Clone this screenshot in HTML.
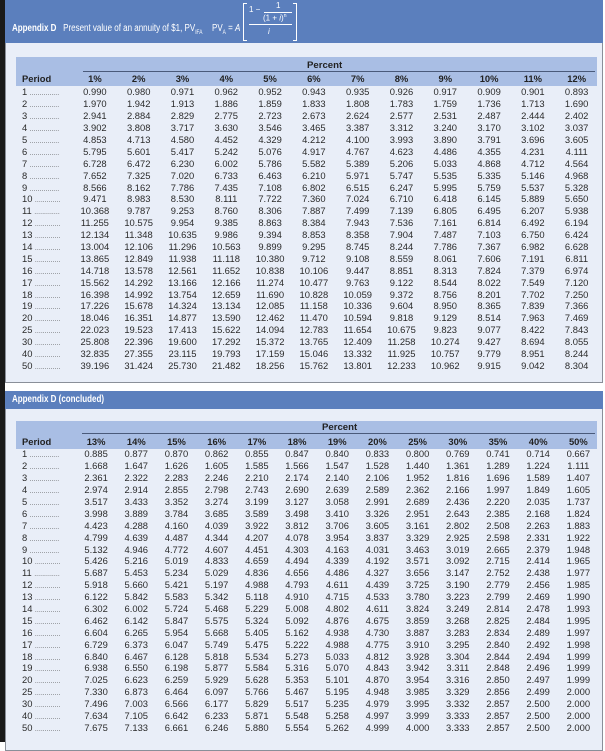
<!DOCTYPE html><html><head><style>
*{margin:0;padding:0;box-sizing:border-box}
body{width:605px;height:742px;overflow:hidden;background:#fff;font-family:"Liberation Sans",Arial,sans-serif;position:relative;color:#222}
.blk{position:absolute;left:0;top:0;width:5px;height:742px;background:#1a1a1a}
.hdr{position:absolute;background:#5b7fbd;color:#fff;font-size:10px}
.panel{position:absolute;background:#e9eef8;border:1px solid #8a8f99}
.band{position:absolute;background:#a9bee4}
.line{position:absolute;height:1.5px;background:#4a5a7a}
.t{position:absolute;font-size:9.6px;white-space:nowrap}
.sx{transform:scaleX(0.8);transform-origin:left top}
.r{display:flex;height:11.9px;line-height:11.9px;font-size:9.4px;color:#2a2a2a}
.r span{text-align:center}
.r span:first-child{text-align:left;padding-left:6px;white-space:nowrap;overflow:hidden;font-size:9.4px}
.top .r span{width:43.8px}.top .r span:first-child{width:57px}
.bot .r span{width:40.2px}.bot .r span:first-child{width:60px}
.h{font-weight:bold;color:#222}
i.d{font-style:normal;font-size:6px;letter-spacing:0.3px;color:#444}
</style></head><body>
<div class="blk"></div>
<div class="panel" style="left:5px;top:0;width:598px;height:383px"></div>
<div class="hdr" style="left:5px;top:0;width:598px;height:43px"></div>
<div class="t sx" style="left:12px;top:23px;color:#fff;font-size:10px"><b>Appendix D</b>&nbsp;&nbsp;&nbsp;Present value of an annuity of $1, PV<sub style="font-size:6px">IFA</sub></div>
<div class="t sx" style="left:212px;top:23px;color:#fff;font-size:10px">PV<sub style="font-size:6px">A</sub> = <i>A</i></div>
<div style="position:absolute;left:243px;top:3px;width:54px;height:38px;border:1.2px solid #fff;border-top:none;border-bottom:none"></div>
<div style="position:absolute;left:243px;top:3px;width:4px;height:38px;border-top:1.2px solid #fff;border-bottom:1.2px solid #fff"></div>
<div style="position:absolute;left:293px;top:3px;width:4px;height:38px;border-top:1.2px solid #fff;border-bottom:1.2px solid #fff"></div>
<div class="t" style="left:249px;top:5px;color:#fff;font-size:8px">1 &minus;</div>
<div class="t" style="left:276px;top:1px;color:#fff;font-size:8px">1</div>
<div style="position:absolute;left:264px;top:12px;width:28px;height:1px;background:#fff"></div>
<div class="t" style="left:263px;top:13px;color:#fff;font-size:8px">(1 + <i>i</i>)<sup style="font-size:5px">n</sup></div>
<div style="position:absolute;left:249px;top:24px;width:43px;height:1px;background:#fff"></div>
<div class="t" style="left:268px;top:27px;color:#fff;font-size:8px"><i>i</i></div>

<div class="band" style="left:16px;top:57px;width:581px;height:29px"></div>
<div class="t h" style="left:307px;top:60px">Percent</div>
<div class="line" style="left:83px;top:70.5px;width:512px"></div>
<div class="top" style="position:absolute;left:16px;top:73px">
<div class="r h"><span>Period</span><span>1%</span><span>2%</span><span>3%</span><span>4%</span><span>5%</span><span>6%</span><span>7%</span><span>8%</span><span>9%</span><span>10%</span><span>11%</span><span>12%</span></div>
<div style="height:1.5px"></div>
<div class="r"><span>1 <i class="d">...............</i></span><span>0.990</span><span>0.980</span><span>0.971</span><span>0.962</span><span>0.952</span><span>0.943</span><span>0.935</span><span>0.926</span><span>0.917</span><span>0.909</span><span>0.901</span><span>0.893</span></div>
<div class="r"><span>2 <i class="d">...............</i></span><span>1.970</span><span>1.942</span><span>1.913</span><span>1.886</span><span>1.859</span><span>1.833</span><span>1.808</span><span>1.783</span><span>1.759</span><span>1.736</span><span>1.713</span><span>1.690</span></div>
<div class="r"><span>3 <i class="d">...............</i></span><span>2.941</span><span>2.884</span><span>2.829</span><span>2.775</span><span>2.723</span><span>2.673</span><span>2.624</span><span>2.577</span><span>2.531</span><span>2.487</span><span>2.444</span><span>2.402</span></div>
<div class="r"><span>4 <i class="d">...............</i></span><span>3.902</span><span>3.808</span><span>3.717</span><span>3.630</span><span>3.546</span><span>3.465</span><span>3.387</span><span>3.312</span><span>3.240</span><span>3.170</span><span>3.102</span><span>3.037</span></div>
<div class="r"><span>5 <i class="d">...............</i></span><span>4.853</span><span>4.713</span><span>4.580</span><span>4.452</span><span>4.329</span><span>4.212</span><span>4.100</span><span>3.993</span><span>3.890</span><span>3.791</span><span>3.696</span><span>3.605</span></div>
<div class="r"><span>6 <i class="d">...............</i></span><span>5.795</span><span>5.601</span><span>5.417</span><span>5.242</span><span>5.076</span><span>4.917</span><span>4.767</span><span>4.623</span><span>4.486</span><span>4.355</span><span>4.231</span><span>4.111</span></div>
<div class="r"><span>7 <i class="d">...............</i></span><span>6.728</span><span>6.472</span><span>6.230</span><span>6.002</span><span>5.786</span><span>5.582</span><span>5.389</span><span>5.206</span><span>5.033</span><span>4.868</span><span>4.712</span><span>4.564</span></div>
<div class="r"><span>8 <i class="d">...............</i></span><span>7.652</span><span>7.325</span><span>7.020</span><span>6.733</span><span>6.463</span><span>6.210</span><span>5.971</span><span>5.747</span><span>5.535</span><span>5.335</span><span>5.146</span><span>4.968</span></div>
<div class="r"><span>9 <i class="d">...............</i></span><span>8.566</span><span>8.162</span><span>7.786</span><span>7.435</span><span>7.108</span><span>6.802</span><span>6.515</span><span>6.247</span><span>5.995</span><span>5.759</span><span>5.537</span><span>5.328</span></div>
<div class="r"><span>10 <i class="d">.............</i></span><span>9.471</span><span>8.983</span><span>8.530</span><span>8.111</span><span>7.722</span><span>7.360</span><span>7.024</span><span>6.710</span><span>6.418</span><span>6.145</span><span>5.889</span><span>5.650</span></div>
<div class="r"><span>11 <i class="d">.............</i></span><span>10.368</span><span>9.787</span><span>9.253</span><span>8.760</span><span>8.306</span><span>7.887</span><span>7.499</span><span>7.139</span><span>6.805</span><span>6.495</span><span>6.207</span><span>5.938</span></div>
<div class="r"><span>12 <i class="d">.............</i></span><span>11.255</span><span>10.575</span><span>9.954</span><span>9.385</span><span>8.863</span><span>8.384</span><span>7.943</span><span>7.536</span><span>7.161</span><span>6.814</span><span>6.492</span><span>6.194</span></div>
<div class="r"><span>13 <i class="d">.............</i></span><span>12.134</span><span>11.348</span><span>10.635</span><span>9.986</span><span>9.394</span><span>8.853</span><span>8.358</span><span>7.904</span><span>7.487</span><span>7.103</span><span>6.750</span><span>6.424</span></div>
<div class="r"><span>14 <i class="d">.............</i></span><span>13.004</span><span>12.106</span><span>11.296</span><span>10.563</span><span>9.899</span><span>9.295</span><span>8.745</span><span>8.244</span><span>7.786</span><span>7.367</span><span>6.982</span><span>6.628</span></div>
<div class="r"><span>15 <i class="d">.............</i></span><span>13.865</span><span>12.849</span><span>11.938</span><span>11.118</span><span>10.380</span><span>9.712</span><span>9.108</span><span>8.559</span><span>8.061</span><span>7.606</span><span>7.191</span><span>6.811</span></div>
<div class="r"><span>16 <i class="d">.............</i></span><span>14.718</span><span>13.578</span><span>12.561</span><span>11.652</span><span>10.838</span><span>10.106</span><span>9.447</span><span>8.851</span><span>8.313</span><span>7.824</span><span>7.379</span><span>6.974</span></div>
<div class="r"><span>17 <i class="d">.............</i></span><span>15.562</span><span>14.292</span><span>13.166</span><span>12.166</span><span>11.274</span><span>10.477</span><span>9.763</span><span>9.122</span><span>8.544</span><span>8.022</span><span>7.549</span><span>7.120</span></div>
<div class="r"><span>18 <i class="d">.............</i></span><span>16.398</span><span>14.992</span><span>13.754</span><span>12.659</span><span>11.690</span><span>10.828</span><span>10.059</span><span>9.372</span><span>8.756</span><span>8.201</span><span>7.702</span><span>7.250</span></div>
<div class="r"><span>19 <i class="d">.............</i></span><span>17.226</span><span>15.678</span><span>14.324</span><span>13.134</span><span>12.085</span><span>11.158</span><span>10.336</span><span>9.604</span><span>8.950</span><span>8.365</span><span>7.839</span><span>7.366</span></div>
<div class="r"><span>20 <i class="d">.............</i></span><span>18.046</span><span>16.351</span><span>14.877</span><span>13.590</span><span>12.462</span><span>11.470</span><span>10.594</span><span>9.818</span><span>9.129</span><span>8.514</span><span>7.963</span><span>7.469</span></div>
<div class="r"><span>25 <i class="d">.............</i></span><span>22.023</span><span>19.523</span><span>17.413</span><span>15.622</span><span>14.094</span><span>12.783</span><span>11.654</span><span>10.675</span><span>9.823</span><span>9.077</span><span>8.422</span><span>7.843</span></div>
<div class="r"><span>30 <i class="d">.............</i></span><span>25.808</span><span>22.396</span><span>19.600</span><span>17.292</span><span>15.372</span><span>13.765</span><span>12.409</span><span>11.258</span><span>10.274</span><span>9.427</span><span>8.694</span><span>8.055</span></div>
<div class="r"><span>40 <i class="d">.............</i></span><span>32.835</span><span>27.355</span><span>23.115</span><span>19.793</span><span>17.159</span><span>15.046</span><span>13.332</span><span>11.925</span><span>10.757</span><span>9.779</span><span>8.951</span><span>8.244</span></div>
<div class="r"><span>50 <i class="d">.............</i></span><span>39.196</span><span>31.424</span><span>25.730</span><span>21.482</span><span>18.256</span><span>15.762</span><span>13.801</span><span>12.233</span><span>10.962</span><span>9.915</span><span>9.042</span><span>8.304</span></div>
</div>

<div class="panel" style="left:5px;top:391px;width:598px;height:360px"></div>
<div class="hdr" style="left:5px;top:391px;width:598px;height:18px"></div>
<div class="t sx" style="left:12px;top:394px;color:#fff;font-size:10px"><b>Appendix D (concluded)</b></div>
<div class="band" style="left:16px;top:421px;width:581px;height:28px"></div>
<div class="t h" style="left:322px;top:422px">Percent</div>
<div class="line" style="left:82px;top:432.5px;width:513px"></div>
<div class="bot" style="position:absolute;left:16px;top:436px">
<div class="r h"><span>Period</span><span>13%</span><span>14%</span><span>15%</span><span>16%</span><span>17%</span><span>18%</span><span>19%</span><span>20%</span><span>25%</span><span>30%</span><span>35%</span><span>40%</span><span>50%</span></div>
<div style="height:0.5px"></div>
<div class="r"><span>1 <i class="d">...............</i></span><span>0.885</span><span>0.877</span><span>0.870</span><span>0.862</span><span>0.855</span><span>0.847</span><span>0.840</span><span>0.833</span><span>0.800</span><span>0.769</span><span>0.741</span><span>0.714</span><span>0.667</span></div>
<div class="r"><span>2 <i class="d">...............</i></span><span>1.668</span><span>1.647</span><span>1.626</span><span>1.605</span><span>1.585</span><span>1.566</span><span>1.547</span><span>1.528</span><span>1.440</span><span>1.361</span><span>1.289</span><span>1.224</span><span>1.111</span></div>
<div class="r"><span>3 <i class="d">...............</i></span><span>2.361</span><span>2.322</span><span>2.283</span><span>2.246</span><span>2.210</span><span>2.174</span><span>2.140</span><span>2.106</span><span>1.952</span><span>1.816</span><span>1.696</span><span>1.589</span><span>1.407</span></div>
<div class="r"><span>4 <i class="d">...............</i></span><span>2.974</span><span>2.914</span><span>2.855</span><span>2.798</span><span>2.743</span><span>2.690</span><span>2.639</span><span>2.589</span><span>2.362</span><span>2.166</span><span>1.997</span><span>1.849</span><span>1.605</span></div>
<div class="r"><span>5 <i class="d">...............</i></span><span>3.517</span><span>3.433</span><span>3.352</span><span>3.274</span><span>3.199</span><span>3.127</span><span>3.058</span><span>2.991</span><span>2.689</span><span>2.436</span><span>2.220</span><span>2.035</span><span>1.737</span></div>
<div class="r"><span>6 <i class="d">...............</i></span><span>3.998</span><span>3.889</span><span>3.784</span><span>3.685</span><span>3.589</span><span>3.498</span><span>3.410</span><span>3.326</span><span>2.951</span><span>2.643</span><span>2.385</span><span>2.168</span><span>1.824</span></div>
<div class="r"><span>7 <i class="d">...............</i></span><span>4.423</span><span>4.288</span><span>4.160</span><span>4.039</span><span>3.922</span><span>3.812</span><span>3.706</span><span>3.605</span><span>3.161</span><span>2.802</span><span>2.508</span><span>2.263</span><span>1.883</span></div>
<div class="r"><span>8 <i class="d">...............</i></span><span>4.799</span><span>4.639</span><span>4.487</span><span>4.344</span><span>4.207</span><span>4.078</span><span>3.954</span><span>3.837</span><span>3.329</span><span>2.925</span><span>2.598</span><span>2.331</span><span>1.922</span></div>
<div class="r"><span>9 <i class="d">...............</i></span><span>5.132</span><span>4.946</span><span>4.772</span><span>4.607</span><span>4.451</span><span>4.303</span><span>4.163</span><span>4.031</span><span>3.463</span><span>3.019</span><span>2.665</span><span>2.379</span><span>1.948</span></div>
<div class="r"><span>10 <i class="d">.............</i></span><span>5.426</span><span>5.216</span><span>5.019</span><span>4.833</span><span>4.659</span><span>4.494</span><span>4.339</span><span>4.192</span><span>3.571</span><span>3.092</span><span>2.715</span><span>2.414</span><span>1.965</span></div>
<div class="r"><span>11 <i class="d">.............</i></span><span>5.687</span><span>5.453</span><span>5.234</span><span>5.029</span><span>4.836</span><span>4.656</span><span>4.486</span><span>4.327</span><span>3.656</span><span>3.147</span><span>2.752</span><span>2.438</span><span>1.977</span></div>
<div class="r"><span>12 <i class="d">.............</i></span><span>5.918</span><span>5.660</span><span>5.421</span><span>5.197</span><span>4.988</span><span>4.793</span><span>4.611</span><span>4.439</span><span>3.725</span><span>3.190</span><span>2.779</span><span>2.456</span><span>1.985</span></div>
<div class="r"><span>13 <i class="d">.............</i></span><span>6.122</span><span>5.842</span><span>5.583</span><span>5.342</span><span>5.118</span><span>4.910</span><span>4.715</span><span>4.533</span><span>3.780</span><span>3.223</span><span>2.799</span><span>2.469</span><span>1.990</span></div>
<div class="r"><span>14 <i class="d">.............</i></span><span>6.302</span><span>6.002</span><span>5.724</span><span>5.468</span><span>5.229</span><span>5.008</span><span>4.802</span><span>4.611</span><span>3.824</span><span>3.249</span><span>2.814</span><span>2.478</span><span>1.993</span></div>
<div class="r"><span>15 <i class="d">.............</i></span><span>6.462</span><span>6.142</span><span>5.847</span><span>5.575</span><span>5.324</span><span>5.092</span><span>4.876</span><span>4.675</span><span>3.859</span><span>3.268</span><span>2.825</span><span>2.484</span><span>1.995</span></div>
<div class="r"><span>16 <i class="d">.............</i></span><span>6.604</span><span>6.265</span><span>5.954</span><span>5.668</span><span>5.405</span><span>5.162</span><span>4.938</span><span>4.730</span><span>3.887</span><span>3.283</span><span>2.834</span><span>2.489</span><span>1.997</span></div>
<div class="r"><span>17 <i class="d">.............</i></span><span>6.729</span><span>6.373</span><span>6.047</span><span>5.749</span><span>5.475</span><span>5.222</span><span>4.988</span><span>4.775</span><span>3.910</span><span>3.295</span><span>2.840</span><span>2.492</span><span>1.998</span></div>
<div class="r"><span>18 <i class="d">.............</i></span><span>6.840</span><span>6.467</span><span>6.128</span><span>5.818</span><span>5.534</span><span>5.273</span><span>5.033</span><span>4.812</span><span>3.928</span><span>3.304</span><span>2.844</span><span>2.494</span><span>1.999</span></div>
<div class="r"><span>19 <i class="d">.............</i></span><span>6.938</span><span>6.550</span><span>6.198</span><span>5.877</span><span>5.584</span><span>5.316</span><span>5.070</span><span>4.843</span><span>3.942</span><span>3.311</span><span>2.848</span><span>2.496</span><span>1.999</span></div>
<div class="r"><span>20 <i class="d">.............</i></span><span>7.025</span><span>6.623</span><span>6.259</span><span>5.929</span><span>5.628</span><span>5.353</span><span>5.101</span><span>4.870</span><span>3.954</span><span>3.316</span><span>2.850</span><span>2.497</span><span>1.999</span></div>
<div class="r"><span>25 <i class="d">.............</i></span><span>7.330</span><span>6.873</span><span>6.464</span><span>6.097</span><span>5.766</span><span>5.467</span><span>5.195</span><span>4.948</span><span>3.985</span><span>3.329</span><span>2.856</span><span>2.499</span><span>2.000</span></div>
<div class="r"><span>30 <i class="d">.............</i></span><span>7.496</span><span>7.003</span><span>6.566</span><span>6.177</span><span>5.829</span><span>5.517</span><span>5.235</span><span>4.979</span><span>3.995</span><span>3.332</span><span>2.857</span><span>2.500</span><span>2.000</span></div>
<div class="r"><span>40 <i class="d">.............</i></span><span>7.634</span><span>7.105</span><span>6.642</span><span>6.233</span><span>5.871</span><span>5.548</span><span>5.258</span><span>4.997</span><span>3.999</span><span>3.333</span><span>2.857</span><span>2.500</span><span>2.000</span></div>
<div class="r"><span>50 <i class="d">.............</i></span><span>7.675</span><span>7.133</span><span>6.661</span><span>6.246</span><span>5.880</span><span>5.554</span><span>5.262</span><span>4.999</span><span>4.000</span><span>3.333</span><span>2.857</span><span>2.500</span><span>2.000</span></div>
</div>
</body></html>
